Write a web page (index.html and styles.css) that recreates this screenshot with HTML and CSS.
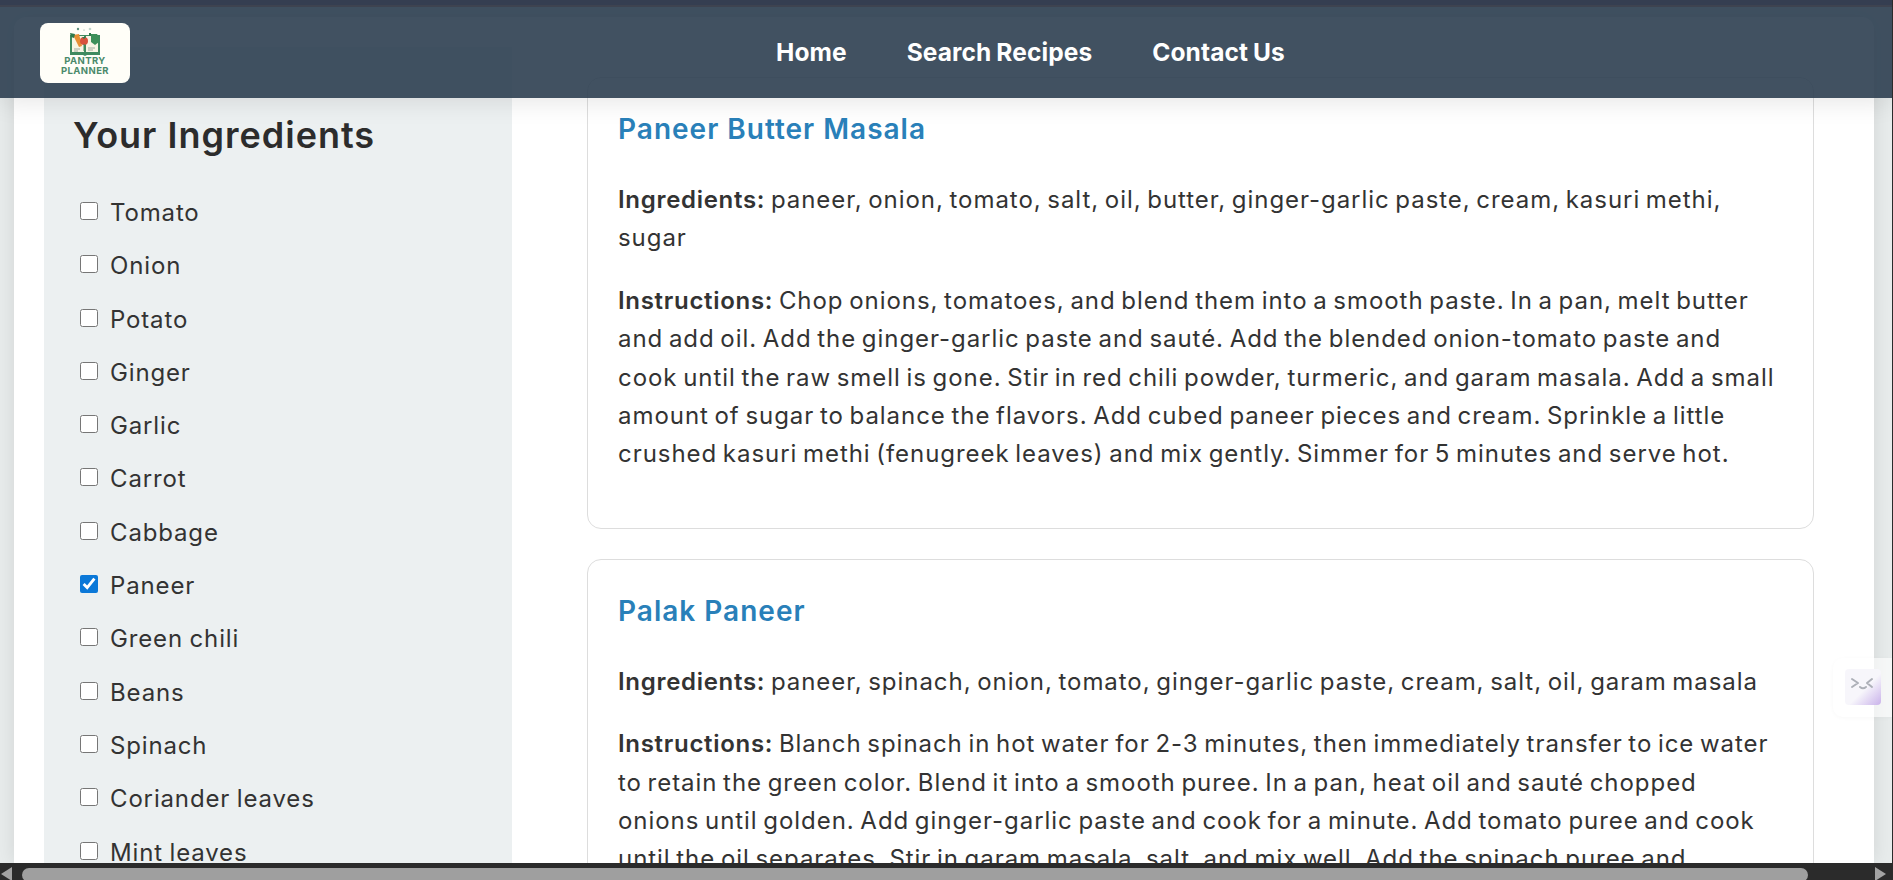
FILE: index.html
```html
<!DOCTYPE html>
<html lang="en">
<head>
<meta charset="utf-8">
<title>Pantry Planner</title>
<link rel="stylesheet" href="styles.css">
</head>
<body>
<div class="viewport">
  <div class="page">
    <aside class="sidebar">
      <h2>Your Ingredients</h2>
      <ul class="ingredients">
        <li><label><input type="checkbox">Tomato</label></li>
        <li><label><input type="checkbox">Onion</label></li>
        <li><label><input type="checkbox">Potato</label></li>
        <li><label><input type="checkbox">Ginger</label></li>
        <li><label><input type="checkbox">Garlic</label></li>
        <li><label><input type="checkbox">Carrot</label></li>
        <li><label><input type="checkbox">Cabbage</label></li>
        <li><label><input type="checkbox" checked>Paneer</label></li>
        <li><label><input type="checkbox">Green chili</label></li>
        <li><label><input type="checkbox">Beans</label></li>
        <li><label><input type="checkbox">Spinach</label></li>
        <li><label><input type="checkbox">Coriander leaves</label></li>
        <li><label><input type="checkbox">Mint leaves</label></li>
      </ul>
    </aside>
    <main class="recipes">
      <article class="card">
        <h3>Paneer Butter Masala</h3>
        <p><strong>Ingredients:</strong> paneer, onion, tomato, salt, oil, butter, ginger-garlic paste, cream, kasuri methi,<br>sugar</p>
        <p><strong>Instructions:</strong> Chop onions, tomatoes, and blend them into a smooth paste. In a pan, melt butter<br>and add oil. Add the ginger-garlic paste and sauté. Add the blended onion-tomato paste and<br>cook until the raw smell is gone. Stir in red chili powder, turmeric, and garam masala. Add a small<br>amount of sugar to balance the flavors. Add cubed paneer pieces and cream. Sprinkle a little<br>crushed kasuri methi (fenugreek leaves) and mix gently. Simmer for 5 minutes and serve hot.</p>
      </article>
      <article class="card">
        <h3>Palak Paneer</h3>
        <p><strong>Ingredients:</strong> paneer, spinach, onion, tomato, ginger-garlic paste, cream, salt, oil, garam masala</p>
        <p><strong>Instructions:</strong> Blanch spinach in hot water for 2-3 minutes, then immediately transfer to ice water<br>to retain the green color. Blend it into a smooth puree. In a pan, heat oil and sauté chopped<br>onions until golden. Add ginger-garlic paste and cook for a minute. Add tomato puree and cook<br>until the oil separates. Stir in garam masala, salt, and mix well. Add the spinach puree and</p>
      </article>
    </main>
  </div>
  <header class="topbar">
    <a class="logo" href="#">
      <svg class="logo-art" viewBox="0 0 36 32" width="36" height="32" aria-hidden="true">
        <circle cx="11" cy="4" r="1.2" fill="#5f8f7c"/><circle cx="23" cy="4" r="1.3" fill="#c3d5cc"/><circle cx="17" cy="5" r=".5" fill="#5f8f7c"/>
        <path d="M3 10h15l15 0v20H20l-2 1-2-1H3z" fill="#3f8a5f"/>
        <path d="M5 11h12v16H5zM19 11h12v16H19z" fill="#f8f5e4"/>
        <path d="M6 10l6-1 3 12-3 1z" fill="#e78f34"/>
        <path d="M3 8l5 1-1 4-3-1zM22 8h2v3h-2z" fill="#2f7a4c"/>
        <circle cx="17" cy="16" r="4" fill="#d8523d"/>
        <path d="M15 12h4l-2 2z" fill="#2f7a4c"/>
        <rect x="16.5" y="19" width="1" height="7" fill="#3f8a5f"/>
        <path d="M24 9h6l2 3v5l-4 3-4-3z" fill="#3d8f59"/>
        <path d="M7 24h6M7 26h4M21 23h7M21 25h5" stroke="#8b9a8f" stroke-width=".8"/>
      </svg>
      <span class="logo-text">PANTRY<br>PLANNER</span>
    </a>
    <nav class="nav">
      <a href="#">Home</a>
      <a href="#">Search Recipes</a>
      <a href="#">Contact Us</a>
    </nav>
  </header>
  <div class="helper">
    <svg class="helper-icon" viewBox="0 0 36 36" width="36" height="36" aria-hidden="true">
      <path d="M7 10l6 4-6 4M27 10l-5 4 5 4M15 18q3 2.5 6 0" fill="none" stroke="#adb0b8" stroke-width="2" stroke-linecap="round" stroke-linejoin="round"/>
    </svg>
  </div>
  <div class="hscroll">
    <span class="arrow arrow-left"></span>
    <span class="thumb"></span>
    <span class="arrow arrow-right"></span>
  </div>
</div>
</body>
</html>
```
FILE: styles.css
```css
* { box-sizing: border-box; }
html, body { margin: 0; height: 100%; overflow: hidden; }
body { font-family: "Inter", "Open Sans", sans-serif; color: #333; background: #e8ecec; }
.viewport { position: relative; width: 1893px; height: 880px; padding-top: 17px; overflow: hidden; background: #e8ecec; border-right: 1px solid #2b2b2b; }
.page { display: flex; align-items: flex-start; width: 1860px; height: 846px; margin-left: 14px; padding-left: 30px; overflow: hidden; background: #fff; border-radius: 12px 12px 0 0; box-shadow: 0 0 20px rgba(0, 0, 0, .1); }
.sidebar { flex: 0 0 468px; height: 816px; margin: 30px 75px 0 0; padding: 30px 30px 0 29px; overflow: hidden; background: #ecf0f1; }
.sidebar h2 { margin: 37px 0 39px; font-size: 36px; line-height: 42px; font-weight: 600; letter-spacing: 1px; color: #2c2c2c; }
.ingredients { list-style: none; margin: 0; padding: 0 0 0 1px; display: flex; flex-direction: column; }
.ingredients li { height: 53.3px; }
.ingredients label { display: flex; align-items: center; font-size: 24px; line-height: 36px; letter-spacing: .85px; word-spacing: -1px; color: #333; }
.ingredients input { width: 18px; height: 18px; margin: 0 12px 4px 6px; accent-color: #0b78d8; }
.recipes { flex: 0 0 1227px; padding-top: 60px; display: flex; flex-direction: column; gap: 30px; }
.card { padding: 0 30px 30px; background: #fff; border: 1px solid #ddd; border-radius: 14px; }
.card h3 { margin: 33px 0 34px; font-size: 28px; line-height: 36px; font-weight: 600; letter-spacing: 1px; color: #2980b9; }
.card p { margin: 0 0 24px; font-size: 24px; line-height: 38.4px; letter-spacing: .95px; word-spacing: -2px; white-space: nowrap; color: #333; }
.card strong { font-weight: 600; letter-spacing: .7px; }
.topbar { position: absolute; left: 0; top: 0; width: 100%; height: 98px; padding: 8px 0 0 40px; display: flex; align-items: center; background: rgba(44, 62, 80, .9); box-shadow: 0 4px 24px rgba(0, 0, 0, .1); }
.topbar::before { content: ""; position: absolute; left: 0; top: 0; width: 100%; height: 7px; background: linear-gradient(#353e51 70%, #3e4350 70%); }
.logo { flex: 0 0 90px; height: 60px; padding-top: 2px; display: flex; flex-direction: column; align-items: center; background: #fffef8; border-radius: 8px; text-decoration: none; }
.logo-art { display: block; flex: none; }
.logo-text { margin-top: -1px; font-size: 9.5px; line-height: 9.5px; font-weight: 700; text-align: center; letter-spacing: .4px; color: #4a8a6b; }
.nav { display: flex; gap: 60px; margin: -2px 0 0 646px; }
.nav a { color: #fff; font-size: 24.5px; font-weight: 700; letter-spacing: .1px; word-spacing: -1px; text-decoration: none; }
.helper { position: absolute; right: 0; top: 658px; width: 59px; height: 59px; padding: 11px 0 0 12px; background: rgba(255, 255, 255, .6); border-radius: 10px 0 0 10px; box-shadow: 0 1px 4px rgba(0, 0, 0, .03); }
.helper-icon { display: block; border-radius: 4px; background: linear-gradient(135deg, #f7f6fb 55%, #c9b2ea); }
.hscroll { position: absolute; left: 0; right: 0; bottom: 0; height: 17px; background: #2b2b2b; }
.thumb { position: absolute; left: 22px; right: 84px; top: 5px; height: 14px; border-radius: 7px; background: #9f9f9f; }
.arrow { position: absolute; top: 4px; width: 0; height: 0; border-top: 7px solid transparent; border-bottom: 7px solid transparent; }
.arrow-left { left: 1px; border-right: 11px solid #a3a3a3; }
.arrow-right { right: 6px; border-left: 11px solid #a3a3a3; }
```
